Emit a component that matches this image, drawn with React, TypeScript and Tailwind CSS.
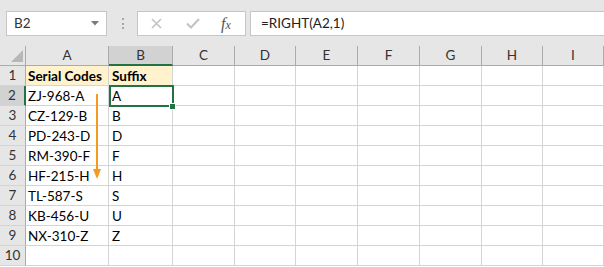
import React from 'react';

const COLUMNS = ['A', 'B', 'C', 'D', 'E', 'F', 'G', 'H', 'I'];

const ROWS: [string, string][] = [
  ['Serial Codes', 'Suffix'],
  ['ZJ-968-A', 'A'],
  ['CZ-129-B', 'B'],
  ['PD-243-D', 'D'],
  ['RM-390-F', 'F'],
  ['HF-215-H', 'H'],
  ['TL-587-S', 'S'],
  ['KB-456-U', 'U'],
  ['NX-310-Z', 'Z'],
  ['', ''],
];

const FONT = "font-['Lato','Liberation_Sans',sans-serif]";

function FormulaBar() {
  return (
    <div className="flex h-[46px] items-start bg-[#e6e6e6] pt-[11px]">
      {/* name box */}
      <div className="ml-[6px] flex h-[25px] w-[101px] items-center justify-between border border-[#c6c6c6] bg-white pl-[7px] pr-[7px]">
        <span className="text-[13.5px] text-[#333]">B2</span>
        <svg width="8" height="5" viewBox="0 0 8 5">
          <path d="M0 0 L8 0 L4 4.5 Z" fill="#7a7a7a" />
        </svg>
      </div>

      {/* grip dots */}
      <div className="ml-[15px] mt-[7px] flex w-[3px] flex-col gap-[2.5px]">
        <span className="h-[2px] w-[2px] bg-[#a6a6a6]" />
        <span className="h-[2px] w-[2px] bg-[#a6a6a6]" />
        <span className="h-[2px] w-[2px] bg-[#a6a6a6]" />
      </div>

      {/* cancel / enter / fx */}
      <div className="ml-[12px] flex h-[25px] w-[109px] items-center border border-[#c6c6c6] bg-white">
        <svg className="ml-[13px]" width="11" height="11" viewBox="0 0 11 11">
          <path d="M1 1 L10 10 M10 1 L1 10" stroke="#c2c2c2" strokeWidth="1.6" />
        </svg>
        <svg className="ml-[24px]" width="14" height="11" viewBox="0 0 14 11">
          <path d="M1 5.5 L5 9.5 L13 1" stroke="#c2c2c2" strokeWidth="2" fill="none" />
        </svg>
        <span className="ml-[21px] font-['Liberation_Serif',serif] text-[16px] italic leading-none text-[#555]">
          f<span className="text-[12px]">x</span>
        </span>
      </div>

      {/* formula input */}
      <div className="ml-[4px] flex h-[25px] flex-1 items-center border-y border-l border-[#c6c6c6] bg-white pl-[10px]">
        <span className="text-[13.5px] text-[#222]">=RIGHT(A2,1)</span>
      </div>
    </div>
  );
}

function Sheet() {
  return (
    <div className="relative grid grid-cols-[26px_83px_64px_62px_61px_62px_62px_62px_61px_61px] bg-white">
      {/* corner */}
      <div className="relative h-[20px] border-b border-r border-[#ababab] bg-[#e6e6e6]">
        <svg className="absolute left-[11px] top-[4px]" width="12" height="12" viewBox="0 0 12 12">
          <path d="M12 0 L12 12 L0 12 Z" fill="#b7b7b7" />
        </svg>
      </div>
      {COLUMNS.map((c) => (
        <div
          key={c}
          className={`flex h-[20px] items-center justify-center text-[13.5px] text-[#333] ${
            c === 'B'
              ? 'border-b-2 border-r border-b-[#217346] border-r-[#ababab] bg-[#d2d2d2]'
              : 'border-b border-r border-[#ababab] bg-[#e6e6e6]'
          }`}
        >
          {c}
        </div>
      ))}

      {ROWS.map(([a, b], i) => {
        const row = i + 1;
        const header = row === 1;
        return (
          <React.Fragment key={row}>
            <div
              className={`flex h-[20px] items-center justify-center border-b border-b-[#d4d4d4] text-[13.5px] text-[#333] ${
                row === 2
                  ? 'border-r-2 border-r-[#217346] bg-[#d2d2d2]'
                  : 'border-r border-r-[#ababab] bg-[#e6e6e6]'
              }`}
            >
              {row}
            </div>
            <div
              className={`flex h-[20px] items-center border-b border-r border-[#d4d4d4] pl-[2px] pt-[1px] text-[13.5px] text-black ${
                header ? 'bg-[#fff2cc] font-bold' : ''
              }`}
            >
              {a}
            </div>
            <div
              className={`relative flex h-[20px] items-center border-b border-r border-[#d4d4d4] pl-[3px] pt-[1px] text-[13.5px] text-black ${
                header ? 'bg-[#fff2cc] font-bold' : ''
              }`}
            >
              {b}
              {row === 2 && (
                <>
                  <div className="absolute left-0 -top-[1px] z-10 h-[22px] w-[65px] border-2 border-[#217346]" />
                  <div className="absolute left-[60px] top-[17px] z-20 h-[7px] w-[7px] border border-white bg-[#217346]" />
                </>
              )}
            </div>
            {COLUMNS.slice(2).map((c) => (
              <div key={c} className="h-[20px] border-b border-r border-[#d4d4d4]" />
            ))}
          </React.Fragment>
        );
      })}

      {/* fill-down arrow */}
      <svg className="absolute left-[92px] top-[48px] z-10" width="10" height="87" viewBox="0 0 10 87">
        <path d="M5 0 L5 76" stroke="#f59a1f" strokeWidth="2" />
        <path d="M1 75 L9 75 L5 85 Z" fill="#f59a1f" />
      </svg>
    </div>
  );
}

export default function App() {
  return (
    <div className={`h-[267px] w-[604px] overflow-hidden bg-white ${FONT}`}>
      <FormulaBar />
      <Sheet />
    </div>
  );
}
